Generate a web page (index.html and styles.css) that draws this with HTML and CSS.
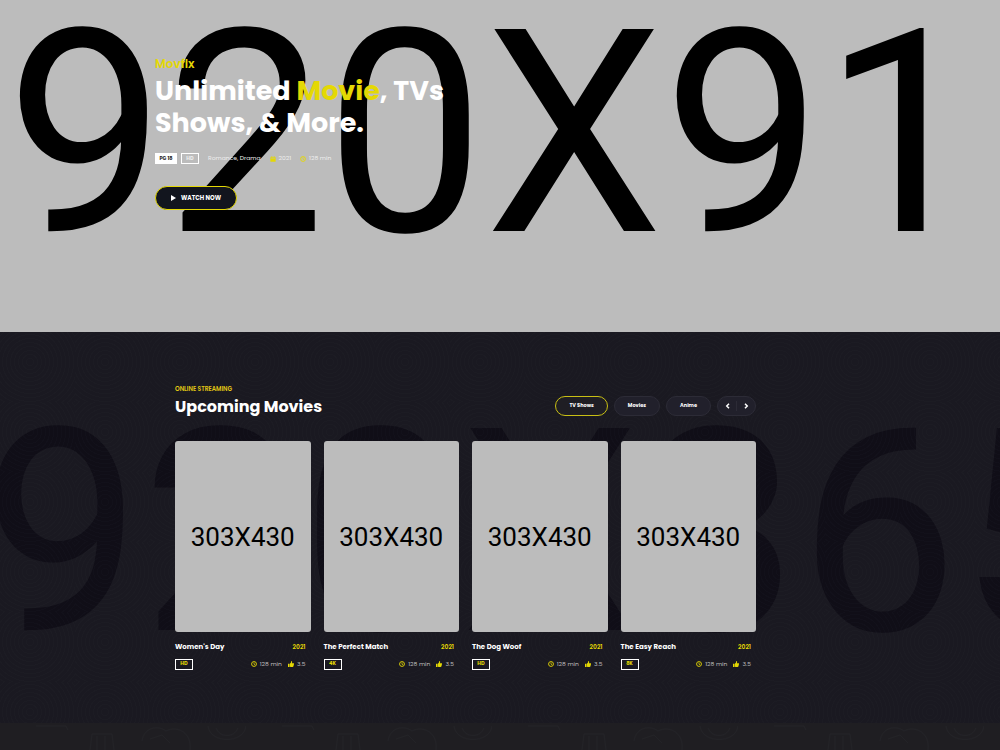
FILE: index.html
```
<!DOCTYPE html>
<html lang="en">
<head>
    <meta charset="UTF-8">
    <meta name="viewport" content="width=device-width, initial-scale=1.0">
    <title>Movflx</title>
    <link rel="stylesheet" href="styles.css">
</head>
<body>
    <!-- shared icons -->
    <svg class="sprite" aria-hidden="true">
        <symbol id="clock" viewBox="0 0 16 16">
            <circle cx="8" cy="8" r="6.5" fill="none" stroke="currentColor" stroke-width="2.4"/>
            <path d="M8 4v4.5l3 1.5" fill="none" stroke="currentColor" stroke-width="2"/>
        </symbol>
        <symbol id="calendar" viewBox="0 0 16 16">
            <path d="M1 3h14v12H1zM4 0h2v4H4zM10 0h2v4h-2z" fill="currentColor"/>
            <path d="M3 6h10" stroke="#bcbcbc" stroke-width="1.5"/>
        </symbol>
        <symbol id="thumb" viewBox="0 0 16 16">
            <path d="M0 7h4v9H0zM5 7l3-3 .5-4c2 0 3 1.500 2.500 3.500L10.500 6H15c1 0 1.300 1 1 2l-1.500 6c-.3 1.300-1 2-2.500 2H8l-3-1z" fill="currentColor"/>
        </symbol>
    </svg>

    <section class="hero">
        <span class="hero-bg" aria-hidden="true">920X91</span>
        <div class="hero-content">
            <h6>Movflx</h6>
            <h1>Unlimited <span>Movie</span>, TVs<br>Shows, &amp; More.</h1>
            <div class="hero-meta">
                <div class="tags">
                    <span class="tag tag-fill">PG 18</span>
                    <span class="tag">HD</span>
                </div>
                <span class="genre">Romance, Drama</span>
                <span class="info"><svg><use href="#calendar"/></svg>2021</span>
                <span class="info"><svg><use href="#clock"/></svg>128 min</span>
            </div>
            <a href="#" class="watch-btn">
                <svg viewBox="0 0 10 12"><path d="M0 0l10 6-10 6z" fill="currentColor"/></svg>
                Watch Now
            </a>
        </div>
    </section>

    <section class="upcoming">
        <span class="upcoming-bg" aria-hidden="true">920X365</span>
        <div class="container">
            <div class="section-head">
                <div class="section-title">
                    <span>Online Streaming</span>
                    <h2>Upcoming Movies</h2>
                </div>
                <div class="tabs">
                    <button class="tab active">TV Shows</button>
                    <button class="tab">Movies</button>
                    <button class="tab">Anime</button>
                    <div class="arrows">
                        <button aria-label="Previous"><svg viewBox="0 0 6 8"><path d="M5 1L2 4l3 3"/></svg></button>
                        <button aria-label="Next"><svg viewBox="0 0 6 8"><path d="M1 1l3 3-3 3"/></svg></button>
                    </div>
                </div>
            </div>

            <div class="movies">
                <article class="movie">
                    <a href="#" class="poster">303X430</a>
                    <div class="row">
                        <h3><a href="#">Women's Day</a></h3>
                        <span class="year">2021</span>
                    </div>
                    <div class="row bottom">
                        <span class="tag quality">HD</span>
                        <span class="info"><svg><use href="#clock"/></svg>128 min</span>
                        <span class="info"><svg><use href="#thumb"/></svg>3.5</span>
                    </div>
                </article>
                <article class="movie">
                    <a href="#" class="poster">303X430</a>
                    <div class="row">
                        <h3><a href="#">The Perfect Match</a></h3>
                        <span class="year">2021</span>
                    </div>
                    <div class="row bottom">
                        <span class="tag quality">4K</span>
                        <span class="info"><svg><use href="#clock"/></svg>128 min</span>
                        <span class="info"><svg><use href="#thumb"/></svg>3.5</span>
                    </div>
                </article>
                <article class="movie">
                    <a href="#" class="poster">303X430</a>
                    <div class="row">
                        <h3><a href="#">The Dog Woof</a></h3>
                        <span class="year">2021</span>
                    </div>
                    <div class="row bottom">
                        <span class="tag quality">HD</span>
                        <span class="info"><svg><use href="#clock"/></svg>128 min</span>
                        <span class="info"><svg><use href="#thumb"/></svg>3.5</span>
                    </div>
                </article>
                <article class="movie">
                    <a href="#" class="poster">303X430</a>
                    <div class="row">
                        <h3><a href="#">The Easy Reach</a></h3>
                        <span class="year">2021</span>
                    </div>
                    <div class="row bottom">
                        <span class="tag quality">8K</span>
                        <span class="info"><svg><use href="#clock"/></svg>128 min</span>
                        <span class="info"><svg><use href="#thumb"/></svg>3.5</span>
                    </div>
                </article>
            </div>
        </div>
    </section>

    <section class="services">
        <svg width="100%" height="27" aria-hidden="true">
            <defs>
                <pattern id="doodles" width="246" height="27" patternUnits="userSpaceOnUse">
                    <g fill="none" stroke="#232327" stroke-width="1">
                        <path d="M36 3h30l2 4M90 27l2-16h20l2 16M97 27V13M105 27V13"/>
                        <path d="M142 18c2-14 16-16 24-10 12-6 26 2 24 19M150 16l12-4 8 8"/>
                        <path d="M208 3c2 18 36 18 38 0M216 5c4 10 18 10 22 0"/>
                    </g>
                </pattern>
            </defs>
            <rect width="100%" height="27" fill="url(#doodles)"/>
        </svg>
    </section>
</body>
</html>
```

FILE: styles.css
```
* {
    box-sizing: border-box;
}
body {
    margin: 0;
    font-family: 'Poppins', 'Inter', sans-serif;
    font-size: 6px;
    color: #fff;
    background: #1f1e22;
}
h1, h2, h3, h6 {
    margin: 0;
}
a {
    color: inherit;
    text-decoration: none;
}
button {
    font-family: inherit;
    color: inherit;
    cursor: pointer;
}
.sprite {
    display: none;
}

/* hero */
.hero {
    position: relative;
    overflow: hidden;
    min-height: 332px;
    padding: 56px 15% 0 155px;
    background: #bcbcbc;
}
.hero-bg, .upcoming-bg {
    position: absolute;
    font-family: 'Roboto', sans-serif;
    font-size: 284px;
    line-height: 284px;
    white-space: nowrap;
}
.hero-bg {
    top: -8px;
    left: 6px;
    color: #000;
}
.hero-content {
    position: relative;
}
.hero h6 {
    font-size: 12px;
    line-height: 16px;
    font-weight: 600;
    color: #e4d804;
}
.hero h1 {
    margin-top: 3px;
    font-size: 27px;
    line-height: 32px;
    font-weight: 700;
}
.hero h1 span {
    color: #e4d804;
}
.hero-meta {
    display: flex;
    align-items: center;
    gap: 9px;
    margin: 14px 0 22px;
    color: #eee;
}
.tags {
    display: flex;
    gap: 4px;
}
.tag {
    display: inline-flex;
    align-items: center;
    justify-content: center;
    min-width: 18px;
    height: 11px;
    border: 1px solid #fff;
    font-size: 5px;
    line-height: 8px;
    font-weight: 700;
}
.tag-fill {
    width: 22px;
    background: #fff;
    color: #1f1e24;
}
.info {
    display: inline-flex;
    align-items: center;
    gap: 3px;
}
.info svg {
    width: 6px;
    height: 6px;
    color: #e4d804;
}
.watch-btn {
    display: inline-flex;
    align-items: center;
    gap: 5px;
    height: 24px;
    padding: 0 15px;
    border: 1px solid #e4d804;
    border-radius: 12px;
    background: #12151e;
    font-weight: 700;
    text-transform: uppercase;
}
.watch-btn svg {
    width: 5px;
    height: 6px;
}

/* upcoming movies */
.upcoming {
    position: relative;
    overflow: hidden;
    padding: 53px 244px 53px 175px;
    background: #1a1921;
}
.upcoming-bg {
    top: 59px;
    left: -18px;
    color: #100e17;
}
/* faint rings over the background */
.upcoming::after {
    content: "";
    position: absolute;
    inset: 0;
    background: repeating-radial-gradient(circle at 30px 30px, transparent 0 3px, rgba(60, 70, 80, 0.05) 3px 4px) 0 0 / 75px 70px;
}
.container {
    position: relative;
    z-index: 1;
}
.section-head {
    display: flex;
    justify-content: space-between;
    align-items: flex-start;
}
.section-title span {
    display: block;
    line-height: 8px;
    font-weight: 600;
    text-transform: uppercase;
    color: #e4c814;
}
.section-title h2 {
    margin-top: 4px;
    font-size: 16px;
    line-height: 20px;
    font-weight: 700;
}
.tabs {
    display: flex;
    gap: 6px;
    margin-top: 11px;
}
.tab {
    height: 20px;
    padding: 0 13px;
    border: 1px solid #2c2b36;
    border-radius: 10px;
    background: #21202b;
    font-size: 5px;
    font-weight: 700;
}
.tab.active {
    border-color: #c8bf14;
    background: #1f1e24;
}
.arrows {
    display: flex;
    align-items: center;
    width: 39px;
    border: 1px solid #2c2b36;
    border-radius: 10px;
    background: #21202b;
}
.arrows button {
    flex: 1;
    display: flex;
    justify-content: center;
    padding: 2px 0;
    border: 0;
    background: none;
}
.arrows button + button {
    border-left: 1px solid #2c2b36;
}
.arrows svg {
    width: 5px;
    height: 6px;
    fill: none;
    stroke: #fff;
    stroke-width: 2;
}
.movies {
    display: grid;
    grid-template-columns: repeat(4, 1fr);
    gap: 13px;
    margin-top: 24px;
}
.poster {
    display: flex;
    align-items: center;
    justify-content: center;
    aspect-ratio: 303 / 428;
    border-radius: 3px;
    background: #bcbcbc;
    color: #000;
    font-family: 'Roboto', sans-serif;
    font-size: 26px;
}
.row {
    display: flex;
    align-items: center;
    justify-content: space-between;
    margin-top: 9px;
    padding-right: 5px;
    line-height: 12px;
}
.row h3 {
    font-size: 7px;
    font-weight: 700;
}
.year {
    font-weight: 600;
    color: #e4d804;
}
.bottom {
    gap: 6px;
    margin-top: 5px;
    color: #bcbcbc;
}
.quality {
    margin-right: auto;
    color: #e4d804;
}

/* services */
.services {
    min-height: 27px;
    background: #1f1e22;
}
.services svg {
    display: block;
}
```
